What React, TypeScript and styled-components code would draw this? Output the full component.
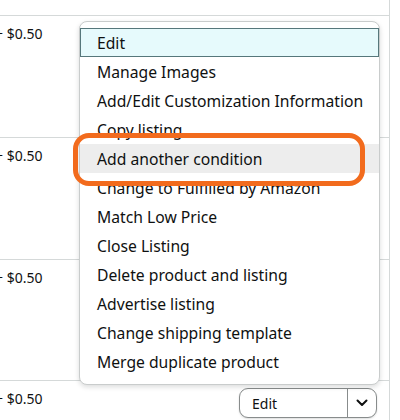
import React from "react";
import styled, { createGlobalStyle } from "styled-components";

const Global = createGlobalStyle`
  html, body { margin: 0; padding: 0; background: #fff; }
  body { font-family: "Noto Sans", "Open Sans", Arial, sans-serif; color: #0f1111; overflow: hidden; }
`;

const Page = styled.div`
  position: relative;
  width: 400px;
  height: 420px;
  overflow: hidden;
`;

const Table = styled.div`
  display: flex;
  flex-direction: column;
  width: 395px;
  margin-left: -5px;
  height: 420px;
  border-right: 1px solid #d5d9d9;
  box-sizing: border-box;
`;

const Row = styled.div<{ $h: number }>`
  display: flex;
  align-items: flex-start;
  justify-content: space-between;
  height: ${(p) => p.$h}px;
  border-top: 1px solid #d5d9d9;
  box-sizing: border-box;
  padding: 9px 12px 0 0;
  &:first-child { border-top: none; }
`;

const Price = styled.span`
  font-size: 14px;
  line-height: 18px;
  color: #0f1111;
`;

const SplitButton = styled.div`
  display: flex;
  align-items: stretch;
  width: 138px;
  height: 30px;
  margin-top: -2px;
  border: 1px solid #888c8c;
  border-radius: 9px;
  box-sizing: border-box;
  background: #fff;
  box-shadow: 0 1px 2px rgba(15, 17, 17, 0.15);
  overflow: hidden;
`;

const SplitLabel = styled.span`
  flex: 1;
  display: flex;
  align-items: center;
  padding-left: 12px;
  font-size: 14px;
  color: #0f1111;
  border-right: 1px solid #888c8c;
`;

const SplitArrow = styled.span`
  width: 28px;
  display: flex;
  align-items: center;
  justify-content: center;
`;

const Menu = styled.ul`
  position: absolute;
  left: 79px;
  top: 21px;
  width: 301px;
  margin: 0;
  padding: 6px 0 8px;
  list-style: none;
  background: #fff;
  border: 1px solid #c9cccc;
  border-radius: 8px;
  box-sizing: border-box;
  box-shadow: 0 2px 5px rgba(15, 17, 17, 0.15);
`;

const Item = styled.li<{ $state?: "focus" | "hover" }>`
  height: 29px;
  display: flex;
  align-items: center;
  box-sizing: border-box;
  font-size: 15.7px;
  color: #0f1111;
  white-space: nowrap;
  background: ${(p) =>
    p.$state === "focus" ? "#e6fafc" : p.$state === "hover" ? "#ededed" : "transparent"};
  border: ${(p) => (p.$state === "focus" ? "1px solid #56777b" : "none")};
  padding-left: ${(p) => (p.$state === "focus" ? "16px" : "17px")};
`;

const Callout = styled.div`
  position: absolute;
  left: 73px;
  top: 133px;
  width: 292px;
  height: 53px;
  border: 5px solid #f26b1d;
  border-radius: 16px;
  box-sizing: border-box;
  pointer-events: none;
`;

const items = [
  "Edit",
  "Manage Images",
  "Add/Edit Customization Information",
  "Copy listing",
  "Add another condition",
  "Change to Fulfilled by Amazon",
  "Match Low Price",
  "Close Listing",
  "Delete product and listing",
  "Advertise listing",
  "Change shipping template",
  "Merge duplicate product",
];

const Chevron = () => (
  <svg width="12" height="8" viewBox="0 0 12 8">
    <path d="M1.5 1.5 L6 6 L10.5 1.5" fill="none" stroke="#0f1111" strokeWidth="2" strokeLinecap="round" strokeLinejoin="round" />
  </svg>
);

export default function App() {
  return (
    <Page>
      <Global />
      <Table>
        <Row $h={15} />
        <Row $h={123}>
          <Price>+ $0.50</Price>
        </Row>
        <Row $h={123}>
          <Price>+ $0.50</Price>
        </Row>
        <Row $h={122}>
          <Price>+ $0.50</Price>
        </Row>
        <Row $h={40}>
          <Price>+ $0.50</Price>
          <SplitButton>
            <SplitLabel>Edit</SplitLabel>
            <SplitArrow>
              <Chevron />
            </SplitArrow>
          </SplitButton>
        </Row>
      </Table>
      <Menu>
        {items.map((t, i) => (
          <Item key={t} $state={i === 0 ? "focus" : i === 4 ? "hover" : undefined}>
            {t}
          </Item>
        ))}
      </Menu>
      <Callout />
    </Page>
  );
}
